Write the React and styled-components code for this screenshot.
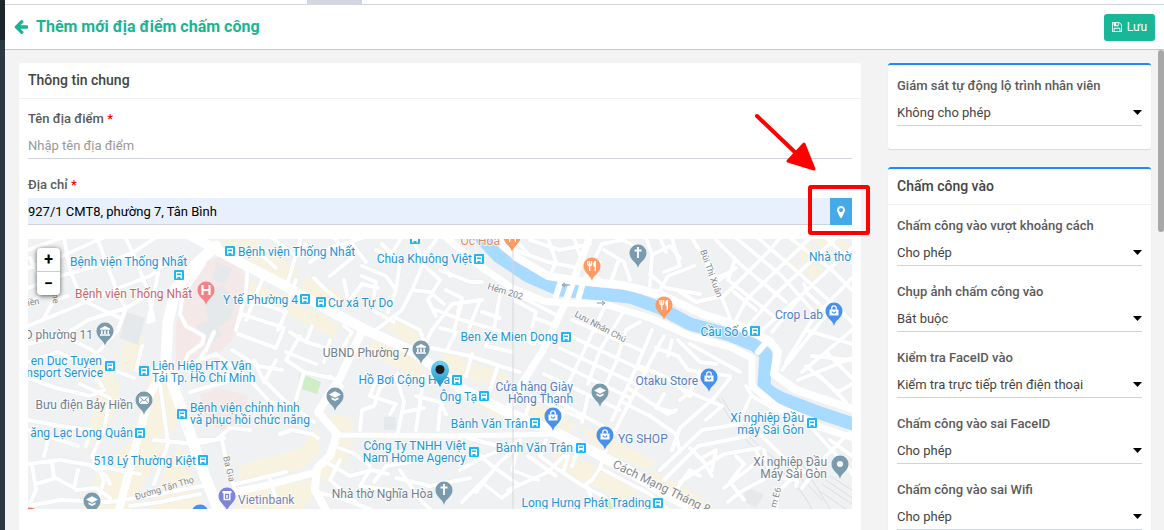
import React from "react";
import styled, { createGlobalStyle } from "styled-components";

const policies = [
	{
		id: "overDistance",
		label: "Chấm công vào vượt khoảng cách",
		value: "Cho phép",
		options: ["Cho phép", "Không cho phép"],
	},
	{
		id: "photo",
		label: "Chụp ảnh chấm công vào",
		value: "Bắt buộc",
		options: ["Bắt buộc", "Không bắt buộc"],
	},
	{
		id: "faceCheck",
		label: "Kiểm tra FaceID vào",
		value: "Kiểm tra trực tiếp trên điện thoại",
		options: ["Kiểm tra trực tiếp trên điện thoại", "Không kiểm tra"],
	},
	{
		id: "wrongFace",
		label: "Chấm công vào sai FaceID",
		value: "Cho phép",
		options: ["Cho phép", "Không cho phép"],
	},
	{
		id: "wrongWifi",
		label: "Chấm công vào sai Wifi",
		value: "Cho phép",
		options: ["Cho phép", "Không cho phép"],
	},
];

const colors = {
	transit: "#1d97d6",
	place: "#73828d",
	shop: "#5480c8",
	bank: "#7683b4",
	hospital: "#c4686c",
	food: "#e88c5c",
	street: "#84888d",
};

const yellowBlocks = [
	"M218 239L260 239L252 258L232 250Z",
	"M246 258L256 243L300 270L288 284Z",
	"M298 292L308 276L345 297L336 309Z",
	"M250 280L340 325L333 338L280 311L246 295Z",
	"M380 325L390 316L420 333L412 344Z",
	"M372 340L412 355L425 370L415 380L400 370L368 352Z",
	"M398 330L428 340L420 352Z",
	"M440 350L508 376L498 388L446 370Z",
	"M462 398L478 392L513 412L500 418Z",
	"M525 398L560 416L578 426L566 432L530 418Z",
	"M578 426L620 442L655 462L648 470L600 450Z",
	"M552 447L600 468L640 492L625 500L580 480L554 462Z",
	"M650 470L690 490L715 509L690 509L652 490Z",
	"M122 345L145 335L140 372L118 368Z",
	"M96 350L120 385L112 420L82 455L96 400Z",
	"M150 378L164 370L178 420L168 440L130 509L82 509L98 470L132 440Z",
	"M180 445L190 470L205 509L150 509L165 470Z",
	"M238 466L300 448L318 425L320 452L304 468L240 484Z",
	"M240 490L312 480L312 500L300 509L235 509Z",
	"M330 415L353 417L352 432L335 430Z",
	"M335 438L355 440L345 462L325 485L318 470Z",
	"M795 255L808 243L818 252L810 265Z",
	"M815 240L832 239L825 250Z",
	"M832 246L842 240L851 248L842 256Z",
	"M792 262L808 268L800 276L791 270Z",
	"M806 285L812 279L816 286L808 291Z",
	"M808 262L824 270L818 282L806 274Z",
];

const pinkBlocks = [
	"M203 262L224 256L242 268L246 290L232 340L205 365L176 362L176 325L184 300Z",
	"M200 395L218 388L248 395L246 415L225 432L206 420Z",
];

const grayBlocks = [
	"M126 312L145 318L138 345L120 338Z",
	"M216 263L232 268L226 284L212 280Z",
	"M208 290L222 286L236 300L230 320L214 330L206 316Z",
	"M196 325L212 320L222 335L208 345Z",
	"M384 417L396 417L396 430L384 430Z",
	"M748 488L764 494L756 508L742 500Z",
];

const canal =
	"M478 234L498 256L528 276L560 290L600 294L630 297L660 308L690 324L730 335L754 345L766 354L764 384Q766 392 786 400L820 413L856 425";

const minorRoads = [
	// north west, around the hospital
	"M28 250L64 237",
	"M28 268L62 256L98 240L112 234",
	"M28 288L60 276L104 264L134 252L158 236",
	"M30 258L46 290L28 306",
	"M64 238L70 270L82 300L120 318",
	"M98 240L106 262L118 294L126 308",
	"M126 238L134 256L146 286L154 320",
	"M28 326L72 308L108 292L150 276L168 262",
	"M28 344L66 334L88 320L126 308L146 296",
	"M44 318L54 300L68 296",
	"M126 308L118 330L100 350L84 364",
	"M72 340L92 350L118 372L134 378",
	"M28 362L58 352L84 364L102 386",
	"M154 320L148 322L156 284L160 262",
	"M182 300L180 314L186 326L204 336L202 344L188 354L184 366",
	"M214 332L206 350L190 372",
	"M184 366L216 354L248 378L270 402L296 408",
	"M142 346L136 370",
	"M204 264L186 290L180 300",
	"M248 264L246 292L236 330",
	// west
	"M28 378L56 388L90 396L104 390",
	"M80 384L110 398L104 430L92 456L104 480L98 500",
	"M28 420L60 426L92 430L86 446",
	"M28 430L78 446",
	"M48 440L44 456",
	"M28 464L60 460L96 466L140 474",
	"M32 464L36 490L28 508",
	"M36 484L56 478L74 488",
	"M52 462L54 478",
	"M74 488L78 470",
	"M92 466L106 476L110 484",
	"M76 490L96 488L110 498",
	"M104 478L98 462",
	"M28 506L60 500L110 502L160 494L212 484",
	"M130 506L160 502L200 494",
	"M158 368L168 444L154 484",
	"M154 440L196 444L224 438",
	"M190 392L240 378",
	"M196 440L216 440L230 428L250 430",
	"M212 384L232 374",
	"M222 440L228 470L236 492",
	// between hospital and ward 7
	"M262 280L246 320",
	"M238 322L242 314L284 328L276 348L238 334",
	"M246 294L252 300L286 312L278 330",
	"M296 280L284 312",
	"M300 336L286 360L304 372L330 378",
	"M290 332L306 342L346 354",
	"M312 326L306 342",
	"M330 340L324 362",
	"M344 326L352 332L340 352",
	"M286 352L316 364",
	"M254 360L262 378L284 400L314 422",
	"M276 360L264 382",
	"M232 350L258 366L282 370",
	"M304 372L296 400",
	"M330 376L342 386L338 400",
	"M280 434L292 430L312 434L318 438",
	"M236 484L286 472",
	"M270 480L276 498",
	// north centre
	"M272 238L296 256L306 244",
	"M256 250L276 268",
	"M300 240L288 282",
	"M310 262L330 248L362 238",
	"M334 238L352 258L330 276",
	"M352 244L366 262",
	"M314 278L326 290L336 298",
	"M344 280L348 300",
	"M350 300L362 284L378 288",
	"M362 276L376 282L372 310L394 322",
	"M362 266L386 276L396 290L388 312",
	"M382 244L400 262L396 290",
	"M400 240L390 256L376 250",
	"M412 238L424 262L412 290L402 310L376 330",
	"M420 262L440 280L428 300L436 316",
	"M412 290L430 292L444 304",
	"M430 256L444 266L450 276",
	"M396 318L420 330L424 342L414 356",
	"M436 240L420 260",
	// centre
	"M424 346L432 330L452 304L482 300",
	"M440 270L470 282L482 282",
	"M446 290L462 298L458 312",
	"M436 310L462 320L510 334L534 344",
	"M440 328L456 332L448 348",
	"M462 302L454 330",
	"M480 300L470 326L466 340",
	"M500 294L494 330L486 346",
	"M482 312L500 318",
	"M432 348L470 356L506 368L520 372",
	"M472 354L466 376",
	"M486 346L512 352",
	"M498 366L488 396",
	"M514 300L536 312L532 328",
	"M520 296L558 316",
	"M530 332L548 340",
	"M534 318L552 324",
	"M546 344L528 338",
	"M376 380L370 396L396 404L390 414",
	"M360 430L362 410L374 406L380 388L398 374",
	"M396 376L404 402L398 432",
	"M404 412L424 408",
	"M424 376L416 430",
	"M416 396L440 402L446 414",
	"M440 408L438 430",
	"M334 446L350 452",
	"M326 462L350 476L372 470L388 474",
	"M340 460L330 480L360 506",
	"M352 452L370 466",
	"M370 470L360 486L390 490",
	"M374 482L386 466L410 462",
	"M396 478L430 486L470 478",
	"M400 470L420 500L430 509",
	"M316 492L340 498L370 509",
	// south centre
	"M468 438L506 448L520 440",
	"M474 450L492 466L518 484",
	"M460 470L486 456L506 448",
	"M476 492L500 462L512 452",
	"M484 484L502 498L512 490",
	"M462 502L490 474",
	"M520 440L512 470L538 480",
	"M528 456L556 476",
	"M508 490L548 472L564 456",
	"M546 440L540 456L556 468L580 484L606 498",
	"M564 470L568 456",
	"M580 444L572 466",
	"M586 484L592 480L600 468L606 450",
	"M600 468L650 494L668 509",
	"M586 484L594 504",
	"M532 396L524 420L546 430",
	"M540 400L580 418",
	"M566 408L558 424",
	// streets east of Luu Nhan Chu
	"M572 320L640 350",
	"M566 334L646 372",
	"M560 348L640 386",
	"M552 360L630 398",
	"M544 374L620 410",
	"M530 386L606 428",
	"M604 308L590 338L570 380L552 400",
	"M622 314L600 350L588 384",
	"M640 322L626 330L616 362L600 398",
	"M652 330L636 368L612 420",
	"M588 396L582 422",
	"M664 336L650 362L634 394L612 436",
	"M656 348L678 356L688 370L730 376",
	"M672 340L668 356",
	"M678 340L700 362L716 364",
	"M690 344L740 372",
	"M640 366L668 378L690 396",
	"M628 388L668 414L676 410",
	"M622 402L650 416L676 434L680 452",
	"M664 394L656 408L674 412",
	// north east
	"M492 238L520 252L548 262L578 268",
	"M516 240L530 256",
	"M530 240L560 250L590 244",
	"M548 238L556 262L550 276",
	"M574 238L582 262",
	"M600 262L586 270L606 284",
	"M584 280L602 244L622 240L640 248",
	"M604 250L624 262L630 280",
	"M610 284L618 262",
	"M646 238L652 254L650 286",
	"M654 254L670 246L680 258",
	"M660 238L666 252",
	"M672 238L680 266L664 272",
	"M650 274L666 288L700 294",
	"M692 238L706 262L722 298L730 318",
	"M660 290L668 276L694 266",
	"M680 292L696 302L722 296",
	"M706 260L716 278L730 272",
	"M714 284L736 268",
	"M724 296L770 250L780 238",
	"M736 320L746 300L810 238",
	"M746 328L780 290L836 238",
	"M760 332L796 300L852 248",
	"M716 240L740 264L786 302",
	"M736 238L782 276L812 310",
	"M758 238L800 274L852 322",
	"M790 238L832 270L852 290",
	"M734 262L728 280L776 318",
	"M734 292L756 310",
	"M826 238L852 262",
	"M772 332L806 290L804 284",
	"M786 362L812 320L852 278",
	"M806 292L836 320",
	"M806 330L852 344",
	"M802 372L852 330",
	"M812 356L852 360",
	"M782 370L830 310",
	"M798 380L852 358",
	"M806 366L838 392L852 384",
	"M826 352L852 378",
	"M820 376L846 402",
	// south east
	"M746 386L752 396L776 410L800 418",
	"M730 378L714 398L680 428L672 450",
	"M684 390L722 406L706 420",
	"M700 374L690 392L680 400",
	"M660 470L702 430L740 424L790 404",
	"M664 480L698 446L748 436",
	"M690 448L704 462L712 476",
	"M702 458L716 450L712 470",
	"M680 482L702 468L724 454L760 448",
	"M676 490L690 470L700 476",
	"M736 456L744 464L730 482L744 500",
	"M724 488L760 460L756 450",
	"M728 502L740 492L770 476L796 480",
	"M770 476L764 450",
	"M776 510L778 492L800 470L812 474",
	"M782 462L800 470L796 486",
	"M808 424L850 470L852 474",
	"M852 430L826 456L802 488",
	"M830 440L852 456",
	"M750 424L796 470",
	"M750 398L740 420",
];

const mainRoads = [
	{ d: "M186 233L243 264L280 283L330 311L370 332L410 350L436 368L460 388L507 412L553 431L590 450L627 470L662 492L704 514", w: 10 },
	{ d: "M216 246L198 262L176 288L168 322L166 360L174 388L188 428L204 474L220 514", w: 11 },
	{ d: "M166 364L150 394L134 452L118 514", w: 8 },
	{ d: "M363 329L340 378L318 412L337 434L330 456L317 468L315 490L328 514", w: 8 },
	{ d: "M317 472L264 486L214 496", w: 7 },
	{ d: "M334 435L452 436L560 434", w: 5 },
	{ d: "M590 236L572 284L564 306L542 352L524 380L508 410", w: 7 },
	{ d: "M490 232L516 257L548 276L580 281L622 285L662 295L702 314L740 326L770 341L778 352L774 374L796 390L856 410", w: 8 },
	{ d: "M442 234L480 266L512 288L544 301L566 303L604 304L650 318L690 336L730 347L752 358L752 386L776 406L820 427L856 439", w: 7 },
	{ d: "M560 284L556 296M582 286L578 300M768 340L758 352", w: 6 },
];

const railway = "M718 398Q740 440 770 462T812 509M722 398Q744 438 774 458T822 500";
const railYard = "M800 460L830 509M826 480L852 498M830 476L852 490M822 484L852 504M818 490L846 509";

const mapLabels = [
	{ x: 70, y: 266, text: "Bệnh viện Thống Nhất", kind: "transit" },
	{ x: 75, y: 298, text: "Bệnh viện Thống Nhất", kind: "hospital" },
	{ x: 238, y: 256, text: "Bệnh viện Thống Nhất", kind: "transit" },
	{ x: 472, y: 263, text: "Chùa Khuông Việt", kind: "transit", end: true },
	{ x: 298, y: 304, text: "Y tế Phường 4", kind: "transit", end: true },
	{ x: 328, y: 307, text: "Cư xá Tự Do", kind: "transit" },
	{ x: 93, y: 339, text: "D phường 11", kind: "place", end: true },
	{ x: 102, y: 365, text: "en Duc Tuyen", kind: "transit", end: true },
	{ x: 103, y: 377, text: "nsport Service", kind: "transit", end: true },
	{ x: 152, y: 370, text: "Liên Hiệp HTX Vận", kind: "transit" },
	{ x: 152, y: 382, text: "Tải Tp. Hồ Chí Minh", kind: "transit" },
	{ x: 133, y: 409, text: "Bưu điện Bảy Hiền", kind: "place", end: true },
	{ x: 190, y: 412, text: "Bệnh viện chỉnh hình", kind: "transit" },
	{ x: 190, y: 424, text: "và phục hồi chức năng", kind: "transit" },
	{ x: 133, y: 437, text: "ăng Lạc Long Quân", kind: "transit", end: true },
	{ x: 196, y: 465, text: "518 Lý Thường Kiệt", kind: "transit", end: true },
	{ x: 238, y: 504, text: "Vietinbank", kind: "bank" },
	{ x: 409, y: 357, text: "UBND Phường 7", kind: "place", end: true },
	{ x: 450, y: 384, text: "Hồ Bơi Cộng Hòa", kind: "transit", end: true },
	{ x: 477, y: 401, text: "Ông Tạ", kind: "transit", end: true },
	{ x: 528, y: 428, text: "Bành Văn Trân", kind: "transit", end: true },
	{ x: 573, y: 452, text: "Bành Văn Trân", kind: "transit", end: true },
	{ x: 466, y: 450, text: "Công Ty TNHH Việt", kind: "transit", end: true },
	{ x: 466, y: 462, text: "Nam Home Agency", kind: "transit", end: true },
	{ x: 433, y: 498, text: "Nhà thờ Nghĩa Hòa", kind: "place", end: true },
	{ x: 500, y: 245, text: "Ốc Hoa", kind: "food", end: true },
	{ x: 558, y: 341, text: "Ben Xe Mien Dong", kind: "transit", end: true },
	{ x: 573, y: 391, text: "Cửa hàng Giày", kind: "shop", end: true },
	{ x: 573, y: 403, text: "Hồng Thạnh", kind: "shop", end: true },
	{ x: 618, y: 443, text: "YG SHOP", kind: "shop" },
	{ x: 651, y: 507, text: "Long Hưng Phát Trading", kind: "transit", end: true },
	{ x: 809, y: 261, text: "Nhà thờ", kind: "transit" },
	{ x: 823, y: 319, text: "Crop Lab", kind: "shop", end: true },
	{ x: 748, y: 336, text: "Cầu Số 6", kind: "transit", end: true },
	{ x: 698, y: 385, text: "Otaku Store", kind: "shop", end: true },
	{ x: 804, y: 422, text: "Xí nghiệp Đầu", kind: "transit", end: true },
	{ x: 804, y: 434, text: "máy Sài Gòn", kind: "transit", end: true },
	{ x: 827, y: 466, text: "Xí nghiệp Đầu", kind: "place", end: true },
	{ x: 827, y: 478, text: "Máy Sài Gòn", kind: "place", end: true },
];

const streetLabels = [
	{ x: 28, y: 306, angle: -10, size: 9, text: "iền" },
	{ x: 52, y: 294, angle: 84, size: 9, text: "ne" },
	{ x: 136, y: 500, angle: -17, size: 9, text: "Đường Tân Thọ" },
	{ x: 223, y: 457, angle: 76, size: 9, text: "Ba Gia" },
	{ x: 487, y: 289, angle: 17, size: 9, text: "Hẻm 202" },
	{ x: 574, y: 316, angle: 28, size: 9, text: "Lưu Nhân Chú" },
	{ x: 700, y: 251, angle: 70, size: 9, text: "Bùi Thị Xuân" },
	{ x: 776, y: 508, angle: -75, size: 9, text: "m E6" },
	{ x: 612, y: 467, angle: 26, size: 12, text: "Cách Mạng Tháng 8" },
];

const busStops = [
	[174, 270], [225, 246], [410, 234], [474, 254], [300, 294], [316, 297],
	[105, 361], [139, 366], [177, 409], [135, 428], [198, 455], [452, 375],
	[479, 391], [530, 418], [576, 443], [469, 447], [561, 332], [653, 498],
	[750, 326], [807, 418],
];

const pins = [
	{ x: 206, y: 290, color: "#f58287", icon: "hospital" },
	{ x: 105, y: 331, color: "#7a9bae", icon: "hall" },
	{ x: 144, y: 400, color: "#7a9bae", icon: "mail" },
	{ x: 92, y: 501, color: "#7a9bae", icon: "school" },
	{ x: 227, y: 496, color: "#7d85d6", icon: "bank" },
	{ x: 200, y: 513, color: "#4790f0", icon: "dot" },
	{ x: 30, y: 516, color: "#f4716f", icon: "dot" },
	{ x: 335, y: 396, color: "#7a9bae", icon: "school" },
	{ x: 421, y: 349, color: "#7a9bae", icon: "hall" },
	{ x: 444, y: 490, color: "#7a9bae", icon: "church" },
	{ x: 512, y: 237, color: "#fb9a62", icon: "food" },
	{ x: 592, y: 266, color: "#fb9a62", icon: "food" },
	{ x: 664, y: 305, color: "#fb9a62", icon: "food" },
	{ x: 638, y: 253, color: "#7a9bae", icon: "church" },
	{ x: 600, y: 392, color: "#7a9bae", icon: "school" },
	{ x: 553, y: 416, color: "#4790f0", icon: "bag" },
	{ x: 605, y: 435, color: "#4790f0", icon: "bag" },
	{ x: 834, y: 311, color: "#4790f0", icon: "bag" },
	{ x: 709, y: 377, color: "#4790f0", icon: "bag" },
	{ x: 840, y: 464, color: "#7a9bae", icon: "dot" },
];

const PinGlyph = ({ icon }) => {
	switch (icon) {
		case "hospital":
			return <path d="M-3.5-5v10M3.5-5v10M-3.5 0h7" fill="none" stroke="#fff" strokeWidth="2.2" />;
		case "church":
			return <path d="M0-6v11M-3.5-2.5h7" fill="none" stroke="#fff" strokeWidth="1.8" />;
		case "hall":
			return <path d="M-5-2.5L0-5l5 2.5v1.2H-5zM-4-.5h1.6v3.5H-4zM-.8-.5H.8v3.5H-.8zM2.4-.5H4v3.5H2.4zM-5 3.3H5v1.4H-5z" fill="#fff" />;
		case "mail":
			return (
				<>
					<rect x="-5" y="-3.5" width="10" height="7.5" fill="#fff" />
					<path d="M-5-3.5L0 .8 5-3.5M-5 4l3.5-4M5 4L1.5 0" fill="none" stroke="#7a9bae" />
				</>
			);
		case "school":
			return <path d="M0-4.8L6-1.5 0 1.8-6-1.5zM-3.5 1.2V3.2L0 5l3.5-1.800v-2L0 3z" fill="#fff" />;
		case "bank":
			return (
				<>
					<path d="M-4.5-5h9v2.2h-9z" fill="#fff" />
					<path d="M-2.8-3h5.6v6.5h-5.6z" fill="none" stroke="#fff" strokeWidth="1.4" />
					<path d="M-.8-1H.8v3H-.8z" fill="#fff" />
				</>
			);
		case "food":
			return (
				<>
					<path d="M-4.2-5v3q0 1.5 1.9 1.5T-.4-2V-5M-2.3-5V5" fill="none" stroke="#fff" strokeWidth="1.3" />
					<path d="M4-5.2V5H2.6V.8H1.4V-3Q1.8-5.2 4-5.2z" fill="#fff" />
				</>
			);
		case "bag":
			return (
				<>
					<path d="M-4.5-1.5h9V4.5h-9z" fill="#fff" />
					<path d="M-2.3-1.5v-1.3a2.3 2.3 0 0 1 4.6 0v1.3" fill="none" stroke="#fff" strokeWidth="1.3" />
					<path d="M-2.2.6Q0 3.6 2.2.6" fill="none" stroke="#4790f0" strokeWidth="1.1" />
				</>
			);
		default:
			return <circle r="3" fill="#fff" />;
	}
};

const CityMap = () => (
	<MapCanvas viewBox="28 239 824 270" preserveAspectRatio="xMidYMid slice" role="img" aria-label="Bản đồ">
		<defs>
			<linearGradient id="markerFill" x1="0" y1="0" x2="0" y2="1">
				<stop offset="0" stopColor="#6fd3f2" />
				<stop offset="1" stopColor="#1c93c9" />
			</linearGradient>
		</defs>
		<rect x="28" y="239" width="824" height="270" fill="#f0f1f3" />
		<path d={yellowBlocks.join("")} fill="#f8f3e0" />
		<path d={pinkBlocks.join("")} fill="#f5e8e8" />
		<path d={grayBlocks.join("")} fill="#e6e9eb" />
		<path d="M300 373L321 382L317 394L298 388Z" fill="#cfeec6" />
		<path d="M604 500L609 498L613 509L606 509Z" fill="#cfeec6" />
		<g fill="none" strokeLinecap="round" strokeLinejoin="round">
			<path d={railway} stroke="#dcdee0" />
			<path d={railYard} stroke="#dcdee0" />
			<path d={minorRoads.join("")} stroke="#eaebed" strokeWidth="5" />
			<path d={minorRoads.join("")} stroke="#fff" strokeWidth="4" />
			<path d={canal} stroke="#a9daff" strokeWidth="13" />
			{mainRoads.map(({ d, w }) => (
				<path key={d} d={d} stroke="#fff" strokeWidth={w} />
			))}
		</g>
		<path d="M513 239V509" stroke="#d6d7d9" />
		<path d="M570 285h-8m3-2l-3 2 3 2M597 303h8m-3-2l3 2-3 2" fill="none" stroke="#93989d" />
		{streetLabels.map(({ x, y, angle, size, text }) => (
			<MapText key={text} $size={size} $color={colors.street} transform={`translate(${x} ${y}) rotate(${angle})`}>
				{text}
			</MapText>
		))}
		{busStops.map(([x, y]) => (
			<g key={`${x}-${y}`} transform={`translate(${x} ${y})`}>
				<rect width="10" height="10" rx="1" fill="#1fb6f4" />
				<path d="M2 2h6v5H2z" fill="#fff" />
				<path d="M3 3.5h4v1.5H3z" fill="#1fb6f4" />
				<path d="M2 7h1.5v1.5H2zM6.5 7H8v1.5H6.5z" fill="#fff" />
			</g>
		))}
		{mapLabels.map(({ x, y, text, kind, end }) => (
			<MapText key={`${x}-${y}`} x={x} y={y} $size={12} $color={colors[kind]} textAnchor={end ? "end" : "start"}>
				{text}
			</MapText>
		))}
		{pins.map(({ x, y, color, icon }) => (
			<g key={`${x}-${y}`} transform={`translate(${x} ${y})`}>
				<path d="M0 15C-1 9-8.5 7-8.5 0a8.5 8.5 0 1 1 17 0C8.5 7 1 9 0 15z" fill={color} />
				<PinGlyph icon={icon} />
			</g>
		))}
		<path d="M440 387C437 380 431 377 431 369.5a9 9 0 1 1 18 0C449 377 443 380 440 387z" fill="url(#markerFill)" />
		<circle cx="440" cy="369.5" r="4.5" fill="#1d1d1d" />
	</MapCanvas>
);

const ArrowLeftIcon = () => (
	<svg width="14" height="16" viewBox="0 128 1536 1664" fill="currentColor" aria-hidden="true">
		<path d="M1536 896v128q0 53-32.5 90.5t-84.5 37.5h-704l293 294q38 36 38 90t-38 90l-75 76q-37 37-90 37-52 0-91-37l-651-652q-37-37-37-90 0-52 37-91l651-650q38-38 91-38 52 0 90 38l75 74q38 38 38 91t-38 91l-293 293h704q52 0 84.5 37.5t32.5 90.5z" />
	</svg>
);

const SaveIcon = () => (
	<svg width="10" height="10" viewBox="0 128 1536 1536" fill="currentColor" aria-hidden="true">
		<path d="M384 1536h768v-384h-768v384zM1280 1536h128v-896q0-14-10-38.5t-20-34.5l-281-281q-10-10-34-20t-39-10v416q0 40-28 68t-68 28h-576q-40 0-68-28t-28-68v-416h-128v1280h128v-416q0-40 28-68t68-28h832q40 0 68 28t28 68v416zM896 608v-320q0-13-9.5-22.5t-22.5-9.5h-192q-13 0-22.5 9.5t-9.5 22.5v320q0 13 9.5 22.5t22.5 9.5h192q13 0 22.5-9.5t9.5-22.5zM1536 640v928q0 40-28 68t-68 28h-1344q-40 0-68-28t-28-68v-1344q0-40 28-68t68-28h928q40 0 88 20t76 48l280 280q28 28 48 76t20 88z" />
	</svg>
);

const MarkerIcon = () => (
	<svg width="8" height="12" viewBox="128 128 1024 1536" fill="currentColor" aria-hidden="true">
		<path d="M896 640q0-106-75-181t-181-75-181 75-75 181 75 181 181 75 181-75 75-181zm256 0q0 109-33 179l-364 774q-16 33-47.5 52t-67.5 19-67.5-19-46.5-52l-365-774q-33-70-33-179 0-212 150-362t362-150 362 150 150 362z" />
	</svg>
);

const SelectField = ({ id, label, value, options }) => (
	<Field>
		<Label htmlFor={id}>{label}</Label>
		<SelectBox>
			<Select id={id} defaultValue={value}>
				{options.map(option => (
					<option key={option}>{option}</option>
				))}
			</Select>
			<Caret viewBox="0 0 9 5" aria-hidden="true">
				<path d="M0 0h9L4.5 5z" />
			</Caret>
		</SelectBox>
	</Field>
);

const App = () => (
	<Shell>
		<GlobalStyle />
		<Rail />
		<Main>
			<TopStrip>
				<TopTab />
			</TopStrip>
			<Header>
				<BackLink href="#">
					<ArrowLeftIcon />
					<Title>Thêm mới địa điểm chấm công</Title>
				</BackLink>
				<SaveButton type="button">
					<SaveIcon />
					Lưu
				</SaveButton>
			</Header>
			<Body>
				<Content>
					<Card>
						<CardTitle>Thông tin chung</CardTitle>
						<CardBody>
							<Field>
								<Label htmlFor="name">
									Tên địa điểm <Required>*</Required>
								</Label>
								<Input id="name" placeholder="Nhập tên địa điểm" />
							</Field>
							<Field>
								<Label htmlFor="address">
									Địa chỉ <Required>*</Required>
								</Label>
								<InputGroup>
									<Input id="address" $filled defaultValue="927/1 CMT8, phường 7, Tân Bình" />
									<LocateButton type="button" aria-label="Định vị">
										<MarkerIcon />
									</LocateButton>
									<Highlight />
									<Pointer viewBox="0 0 64 60" aria-hidden="true">
										<path d="M4 4L46 44" stroke="#f00" strokeWidth="4" strokeLinecap="round" />
										<path d="M61 57L35 49L51 32Z" fill="#f00" stroke="#f00" strokeWidth="3" strokeLinejoin="round" />
									</Pointer>
								</InputGroup>
							</Field>
							<MapBox>
								<CityMap />
								<ZoomControl>
									<ZoomButton type="button">+</ZoomButton>
									<ZoomButton type="button">−</ZoomButton>
								</ZoomControl>
							</MapBox>
						</CardBody>
					</Card>
					<Side>
						<SideCard>
							<SideBody>
								<SelectField
									id="tracking"
									label="Giám sát tự động lộ trình nhân viên"
									value="Không cho phép"
									options={["Không cho phép", "Cho phép"]}
								/>
							</SideBody>
						</SideCard>
						<SideCard>
							<CardTitle>Chấm công vào</CardTitle>
							<SideBody>
								{policies.map(policy => (
									<SelectField key={policy.id} {...policy} />
								))}
							</SideBody>
						</SideCard>
					</Side>
				</Content>
				<ScrollTrack>
					<ScrollThumb />
				</ScrollTrack>
			</Body>
		</Main>
	</Shell>
);

export default App;

const GlobalStyle = createGlobalStyle`
	* {
		box-sizing: border-box;
	}

	body {
		margin: 0;
		background: #f3f3f3;
		font-family: Roboto, "Liberation Sans", sans-serif;
		font-size: 13px;
		color: #444;
	}

	button, input, select {
		font: inherit;
	}
`;

const Shell = styled.div`
	display: flex;
	height: 100vh;
	overflow: hidden;
`;

const Rail = styled.aside`
	flex: none;
	width: 5px;
	background: linear-gradient(#1e272c 40px, #2b3a41 40px);
`;

const Main = styled.div`
	flex: 1;
	min-width: 0;
	display: flex;
	flex-direction: column;
`;

const TopStrip = styled.div`
	flex: none;
	height: 5px;
	padding-left: 302px;
	background: #fff;
	border-bottom: 1px solid #d2d6de;
`;

const TopTab = styled.div`
	width: 55px;
	height: 4px;
	background: #d2d6de;
`;

const Header = styled.header`
	flex: none;
	display: flex;
	align-items: center;
	justify-content: space-between;
	height: 45px;
	padding: 0 9px;
	background: #fff;
	border-bottom: 1px solid #c8c8c8;
`;

const BackLink = styled.a`
	display: flex;
	align-items: center;
	gap: 8px;
	color: #1bb394;
	text-decoration: none;
`;

const Title = styled.h1`
	margin: 0;
	font-size: 16px;
	font-weight: 700;
	line-height: 20px;
`;

const SaveButton = styled.button`
	display: flex;
	align-items: center;
	gap: 5px;
	height: 27px;
	padding: 0 8px;
	border: none;
	border-radius: 3px;
	background: #18b797;
	color: #fff;
	font-size: 12px;
	cursor: pointer;
`;

const Body = styled.div`
	flex: 1;
	min-height: 0;
	display: flex;
`;

const Content = styled.main`
	flex: 1;
	min-width: 0;
	display: grid;
	grid-template-columns: minmax(0, 1fr) 263px;
	gap: 27px;
	padding: 13px 7px 0 14px;
	overflow: hidden;
`;

const Card = styled.section`
	background: #fff;
	border-radius: 3px;
	box-shadow: 0 1px 1px rgba(0, 0, 0, 0.1);
`;

const CardTitle = styled.h2`
	height: 36px;
	margin: 0;
	padding: 0 9px;
	border-bottom: 1px solid #f1f1f1;
	font-size: 14px;
	font-weight: 500;
	line-height: 35px;
	color: #444;
`;

const CardBody = styled.div`
	display: flex;
	flex-direction: column;
	gap: 16px;
	padding: 10px 9px 36px;
`;

const Side = styled.div`
	display: flex;
	flex-direction: column;
	gap: 18px;
`;

const SideCard = styled(Card)`
	border-top: 2px solid #2489f8;
`;

const SideBody = styled(CardBody)`
	padding: 11px 9px 23px;
`;

const Field = styled.div`
	display: flex;
	flex-direction: column;
	gap: 3px;
`;

const Label = styled.label`
	font-weight: 500;
	line-height: 20px;
	color: #5a5a5a;
`;

const Required = styled.span`
	color: #f00;
`;

const Input = styled.input`
	width: 100%;
	min-width: 0;
	height: 27px;
	padding: 0;
	border: none;
	border-bottom: 1px solid #d0d2dd;
	border-radius: 0;
	outline: none;
	background: ${({ $filled }) => ($filled ? "#e8f0fe" : "transparent")};
	color: #000;

	&::placeholder {
		color: #999;
	}
`;

const InputGroup = styled.div`
	position: relative;
	z-index: 1;
	display: flex;
`;

const LocateButton = styled.button`
	flex: none;
	display: flex;
	align-items: center;
	justify-content: center;
	width: 22px;
	height: 27px;
	padding: 0;
	border: none;
	background: #45aae8;
	color: #fff;
	cursor: pointer;
`;

const Highlight = styled.div`
	position: absolute;
	top: -13px;
	right: -18px;
	width: 62px;
	height: 50px;
	border: 4px solid #f00;
	border-radius: 3px;
	pointer-events: none;
`;

const Pointer = styled.svg`
	position: absolute;
	top: -86px;
	right: 35px;
	width: 64px;
	height: 60px;
	fill: none;
	pointer-events: none;
`;

const MapBox = styled.div`
	position: relative;
	height: 270px;
	margin-top: -2px;
	overflow: hidden;
`;

const MapCanvas = styled.svg`
	display: block;
	width: 100%;
	height: 100%;
`;

const MapText = styled.text`
	font-size: ${({ $size }) => $size}px;
	fill: ${({ $color }) => $color};
	stroke: #fff;
	stroke-width: 2px;
	stroke-opacity: 0.7;
	paint-order: stroke;
`;

const ZoomControl = styled.div`
	position: absolute;
	top: 9px;
	left: 9px;
	display: grid;
	gap: 1px;
	border-radius: 4px;
	background: #ccc;
	box-shadow: 0 1px 5px rgba(0, 0, 0, 0.65);
	overflow: hidden;
`;

const ZoomButton = styled.button`
	width: 23px;
	height: 23px;
	padding: 0;
	border: none;
	background: #fff;
	color: #000;
	font-size: 16px;
	font-weight: 700;
	line-height: 23px;
	cursor: pointer;
`;

const SelectBox = styled.div`
	display: grid;
	align-items: center;
`;

const Select = styled.select`
	grid-area: 1 / 1;
	width: 100%;
	height: 27px;
	padding: 0;
	border: none;
	border-bottom: 1px solid #d0d2dd;
	border-radius: 0;
	outline: none;
	appearance: none;
	background: transparent;
	color: #444;
`;

const Caret = styled.svg`
	grid-area: 1 / 1;
	justify-self: end;
	width: 9px;
	height: 5px;
	fill: #000;
	pointer-events: none;
`;

const ScrollTrack = styled.div`
	flex: none;
	width: 6px;
`;

const ScrollThumb = styled.div`
	height: 38%;
	border-radius: 3px;
	background: #a8a8a8;
`;
